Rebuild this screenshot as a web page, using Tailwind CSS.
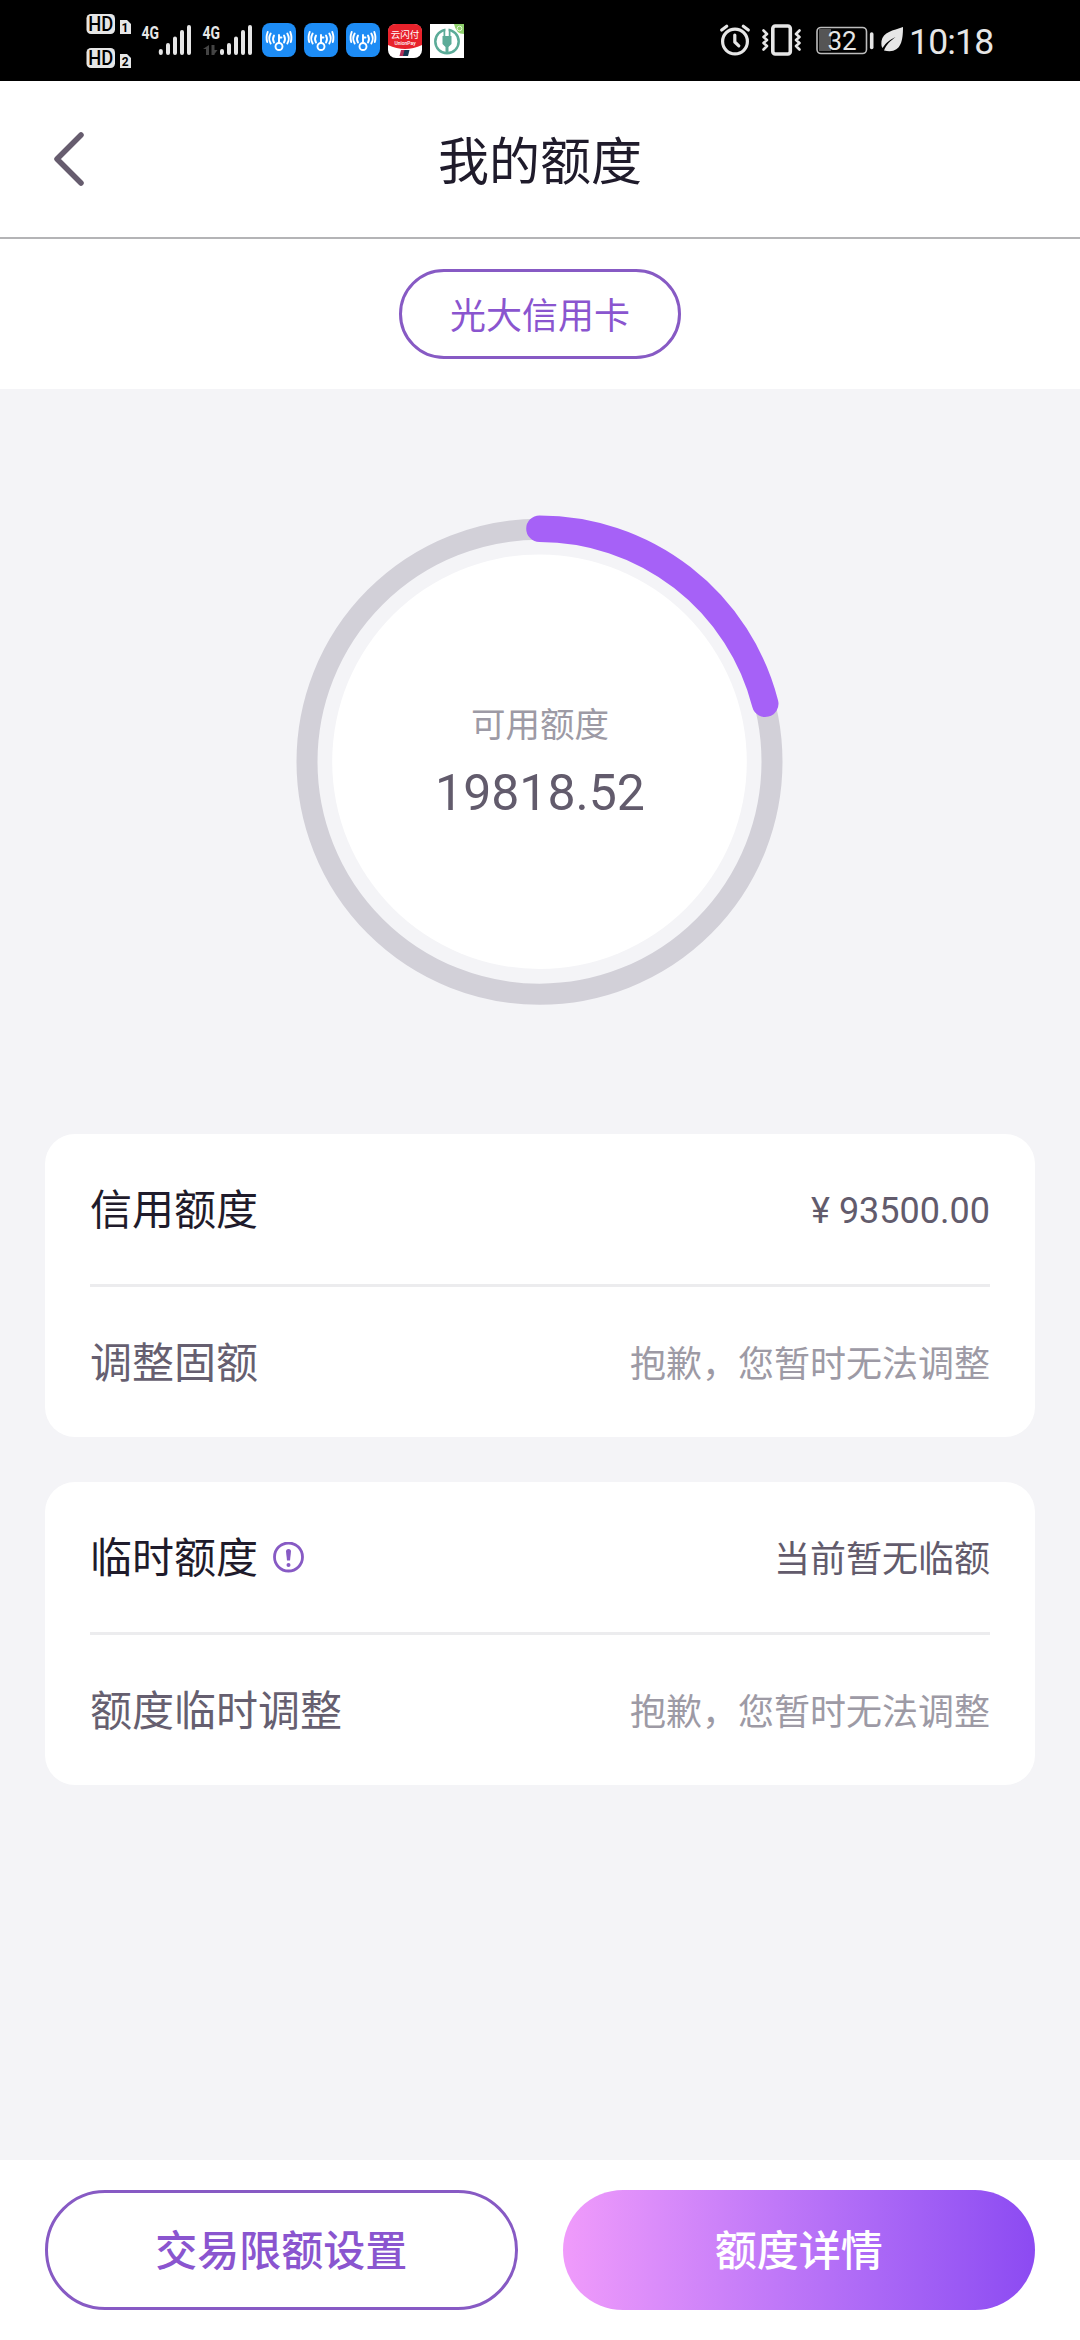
<!DOCTYPE html>
<html lang="zh-CN">
<head>
<meta charset="utf-8">
<title>我的额度</title>
<script src="https://cdn.jsdelivr.net/npm/@tailwindcss/browser@4"></script>
</head>
<body class="flex h-[2340px] w-[1080px] flex-col overflow-hidden bg-[#f4f4f7] font-['Roboto','Noto_Sans_CJK_SC',sans-serif] text-[#1f1b2b]">

<!-- Status bar -->
<div class="flex h-[81px] shrink-0 items-start bg-black">
  <svg class="ml-[70px] h-[81px] w-[192px] shrink-0" viewBox="70 0 192 81" fill="#e6e6e6" font-family="Roboto, sans-serif">
    <rect x="86.500" y="14" width="28.500" height="20" rx="4.500"/>
    <rect x="86.500" y="48" width="28.500" height="20" rx="4.500"/>
    <g fill="#000" font-size="20" font-weight="500" text-anchor="middle">
      <text x="100.800" y="31" textLength="25" lengthAdjust="spacingAndGlyphs">HD</text>
      <text x="100.800" y="65" textLength="25" lengthAdjust="spacingAndGlyphs">HD</text>
    </g>
    <path d="M120 20h7l4 4v10h-11zM120 54h7l4 4v10h-11z"/>
    <g fill="#000" font-size="12" font-weight="700" text-anchor="middle"><text x="125" y="32">1</text><text x="125.300" y="66">2</text></g>
    <g font-size="19" font-weight="700">
      <text x="141.500" y="38.500" textLength="17.500" lengthAdjust="spacingAndGlyphs">4G</text>
      <text x="202.500" y="38.500" textLength="17.500" lengthAdjust="spacingAndGlyphs">4G</text>
    </g>
    <path stroke="#e6e6e6" stroke-width="4" stroke-linecap="round" d="M160.800 51v2M168 45v8M175 38.500V53M182 32v21M189 27v26M222 51v2M229 45v8M236 38.500V53M243 32v21M250 27v26"/>
    <path fill="#444" d="M209 45v10h-3v-6h-3zM211.500 45v10h3v-1l3-4h-3v-5z"/>
  </svg>
  <div class="mt-[23px] flex shrink-0 gap-2">
    <svg class="h-[34px] w-[34px]" viewBox="0 0 34 34"><rect width="34" height="34" rx="8" fill="#1d8cf5"/><g fill="none" stroke="#fff" stroke-width="1.900" stroke-linecap="round"><circle cx="17" cy="23.500" r="3.500"/><path d="M17 20V12M17 14.500h2.500M12 12.500q-2 3.500 0 7M22 12.500q2 3.500 0 7M8.700 10.500q-3 5 0 10M25.300 10.500q3 5 0 10M5.700 9q-2 5.500-.5 10M28.300 9q2 5.500.5 10"/></g></svg>
    <svg class="h-[34px] w-[34px]" viewBox="0 0 34 34"><rect width="34" height="34" rx="8" fill="#1d8cf5"/><g fill="none" stroke="#fff" stroke-width="1.900" stroke-linecap="round"><circle cx="17" cy="23.500" r="3.500"/><path d="M17 20V12M17 14.500h2.500M12 12.500q-2 3.500 0 7M22 12.500q2 3.500 0 7M8.700 10.500q-3 5 0 10M25.300 10.500q3 5 0 10M5.700 9q-2 5.500-.5 10M28.300 9q2 5.500.5 10"/></g></svg>
    <svg class="h-[34px] w-[34px]" viewBox="0 0 34 34"><rect width="34" height="34" rx="8" fill="#1d8cf5"/><g fill="none" stroke="#fff" stroke-width="1.900" stroke-linecap="round"><circle cx="17" cy="23.500" r="3.500"/><path d="M17 20V12M17 14.500h2.500M12 12.500q-2 3.500 0 7M22 12.500q2 3.500 0 7M8.700 10.500q-3 5 0 10M25.300 10.500q3 5 0 10M5.700 9q-2 5.500-.5 10M28.300 9q2 5.500.5 10"/></g></svg>
    <svg class="mt-px h-[34px] w-[34px]" viewBox="0 0 34 34"><rect width="34" height="34" rx="8" fill="#fff"/><path fill="#e8222b" d="M0 21V8q0-8 8-8h18q8 0 8 8v13q-17 8-34 0z"/><text x="17" y="14" font-family="Noto Sans CJK SC, sans-serif" font-size="9.500" fill="#fff" text-anchor="middle">云闪付</text><text x="17" y="21" font-family="Roboto, sans-serif" font-size="5" font-weight="500" fill="#fff" text-anchor="middle">UnionPay</text><path fill="#b0305a" d="M13 26h5l-1.500 6h-5z"/><path fill="#163a54" d="M16.500 26h5L20 32h-5z"/></svg>
    <svg class="mt-px h-[34px] w-[34px]" viewBox="0 0 34 34"><path fill="#fff" d="M0 0h34v34H0z"/><path fill="#8fd06c" d="M24 0h10v10q-8 0-10-10z"/><circle cx="29.500" cy="4.500" r="2.300" fill="none" stroke="#e4f5d8"/><g fill="none" stroke="#5bab98"><circle cx="17" cy="17.500" r="11.700" stroke-width="2.500"/><path stroke-width="2" d="M14.500 5v12M19.500 5v12"/></g><path fill="#fff" d="M15.500 3h3v9h-3z"/><path fill="#5bab98" d="M12.500 12h9v8l-3 3v6h-3v-6l-3-3z"/></svg>
  </div>
  <svg class="ml-[246px] h-[81px] w-[202px] shrink-0" viewBox="710 0 202 81" fill="none" stroke="#e6e6e6" stroke-linecap="round" stroke-linejoin="round">
    <g stroke-width="3.200"><circle cx="735" cy="41.500" r="12.400"/><path d="M734.800 35v7l4 3.800M721.700 30l5-3.700M748.300 30l-5-3.700"/></g>
    <rect x="772.800" y="26" width="17.500" height="28" rx="2.500" stroke-width="3.600"/>
    <path stroke-width="2.600" d="M763.500 30.500l3.500 3.500-3.500 3 3.500 3-3.500 3 3.500 3-3.500 3.500M799.500 30.500L796 34l3.500 3-3.500 3 3.500 3-3.500 3 3.500 3.500"/>
    <path fill="#555" stroke="none" d="M819 29h12v22h-12z"/>
    <rect x="817" y="27.500" width="49.500" height="26" rx="4" stroke="#bdbdbd" stroke-width="1.600"/>
    <text x="842" y="49.500" fill="#e6e6e6" stroke="none" font-family="Roboto, sans-serif" font-size="26" text-anchor="middle">32</text>
    <path stroke-width="3.600" d="M871.700 34v13.500"/>
    <path fill="#e6e6e6" stroke="none" d="M903 27c-10 3.500-20 5-21.500 14-.4 4 .2 6 1 7 4-6 8-8.500 13-11-5 4-9 7-11.500 13.500C900 54 903 43 903 27z"/>
  </svg>
  <span class="-ml-[3px] mt-[21px] text-[35.500px] leading-[42px] tracking-[-0.8px] text-[#e6e6e6]">10:18</span>
</div>

<!-- Title bar -->
<header class="grid h-[158px] shrink-0 grid-cols-[1fr_auto_1fr] items-center border-b-2 border-[#b4b4b6] bg-white">
  <svg class="ml-[51px] h-[60px] w-[36px]" viewBox="0 0 36 60" fill="none" stroke="#665c6e" stroke-width="5.500" stroke-linecap="round" stroke-linejoin="round"><path d="M30 6L6 30l24 24"/></svg>
  <h1 class="pt-[7px] text-[51px] leading-[60px]">我的额度</h1>
</header>

<div class="flex h-[150px] shrink-0 items-center justify-center bg-white">
  <button class="flex h-[90px] w-[282px] items-center justify-center rounded-full border-3 border-[#875ac4] pt-[5px] text-[36px] text-[#8a55cf]">光大信用卡</button>
</div>

<!-- Available credit ring -->
<main class="flex grow flex-col px-[45px]">
  <section class="mb-px grid h-[744px] shrink-0 place-items-center">
    <svg class="col-start-1 row-start-1 h-[500px] w-[500px]" viewBox="0 0 500 500" fill="none">
      <circle cx="249.500" cy="250.700" r="232.500" stroke="#d2d0d8" stroke-width="21"/>
      <circle cx="249.500" cy="250.700" r="207.300" fill="#fff"/>
      <path d="M249.500 17.700A233 233 0 0 1 475.200 192.700" stroke="#a661f7" stroke-width="26.600" stroke-linecap="round"/>
    </svg>
    <div class="col-start-1 row-start-1 flex flex-col items-center">
      <span class="text-[34.500px] leading-[50px] text-[#9d9aa5]">可用额度</span>
      <span class="mt-[13px] text-[50px] leading-[60px] text-[#625b6c]">19818.52</span>
    </div>
  </section>

  <section class="flex h-[303px] shrink-0 flex-col rounded-[30px] bg-white px-[45px]">
    <div class="flex h-[153px] items-center justify-between border-b-3 border-[#ececee]">
      <span class="pt-[3px] text-[42px]">信用额度</span>
      <span class="pt-[3px] text-[36px] text-[#625b6c]">¥ 93500.00</span>
    </div>
    <div class="flex grow items-center justify-between">
      <span class="pt-[3px] text-[42px] text-[#665f70]">调整固额</span>
      <span class="pt-[5px] text-[36px] text-[#9d9aa5]">抱歉，您暂时无法调整</span>
    </div>
  </section>

  <section class="mt-[45px] flex h-[303px] shrink-0 flex-col rounded-[30px] bg-white px-[45px]">
    <div class="flex h-[153px] items-center justify-between border-b-3 border-[#ececee]">
      <div class="flex items-center">
        <span class="pt-[3px] text-[42px]">临时额度</span>
        <svg class="ml-[15px] h-[31px] w-[31px]" viewBox="0 0 31 31"><circle cx="15.500" cy="15" r="14" fill="none" stroke="#875ac4" stroke-width="2.800"/><path fill="#875ac4" d="M13 9.500a2.500 2.500 0 0 1 5 0l-1 9h-3z"/><circle cx="15.500" cy="23" r="2" fill="#875ac4"/></svg>
      </div>
      <span class="pt-[5px] text-[36px] text-[#625b6c]">当前暂无临额</span>
    </div>
    <div class="flex grow items-center justify-between">
      <span class="pt-[3px] text-[42px] text-[#665f70]">额度临时调整</span>
      <span class="pt-[5px] text-[36px] text-[#9d9aa5]">抱歉，您暂时无法调整</span>
    </div>
  </section>
</main>

<!-- Bottom actions -->
<footer class="grid h-[180px] shrink-0 grid-cols-2 items-center gap-[45px] bg-white px-[45px] text-[42px] font-medium">
  <button class="h-[120px] rounded-full border-3 border-[#875ac4] pt-[3px] text-[#8a55cf]">交易限额设置</button>
  <button class="h-[120px] rounded-full bg-linear-to-r from-[#f09bfb] via-[#c078f8] via-45% to-[#8c4af2] pt-[3px] text-white">额度详情</button>
</footer>
</body>
</html>
